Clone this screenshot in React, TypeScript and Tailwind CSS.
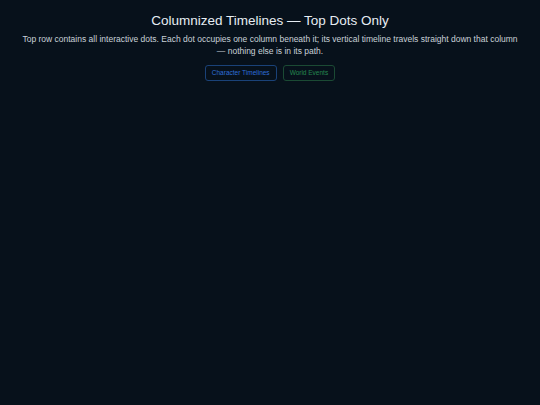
export default function App() {
  return (
    <div
      className="min-h-[405px] bg-[#07111b] text-[#e6edf3] pt-[12px]"
      style={{ fontFamily: '"Liberation Sans", Arial, sans-serif' }}
    >
      <header className="text-center px-[20px]">
        <h1 className="text-[13.5px] leading-[18px] font-normal">Columnized Timelines — Top Dots Only</h1>
        <p className="mt-[3px] text-[8.5px] leading-[12px] text-[#c9d1d9]">
          Top row contains all interactive dots. Each dot occupies one column beneath it; its vertical timeline travels
          straight down that column — nothing else is in its path.
        </p>
        <div className="mt-[8px] flex justify-center gap-[6px]">
          <button className="h-[16px] px-[6px] rounded-[3px] border border-[#1a4278] text-[6.5px] text-[#2f6fd8]">
            Character Timelines
          </button>
          <button className="h-[16px] px-[6px] rounded-[3px] border border-[#1b4a34] text-[6.5px] text-[#25874f]">
            World Events
          </button>
        </div>
      </header>
    </div>
  )
}
